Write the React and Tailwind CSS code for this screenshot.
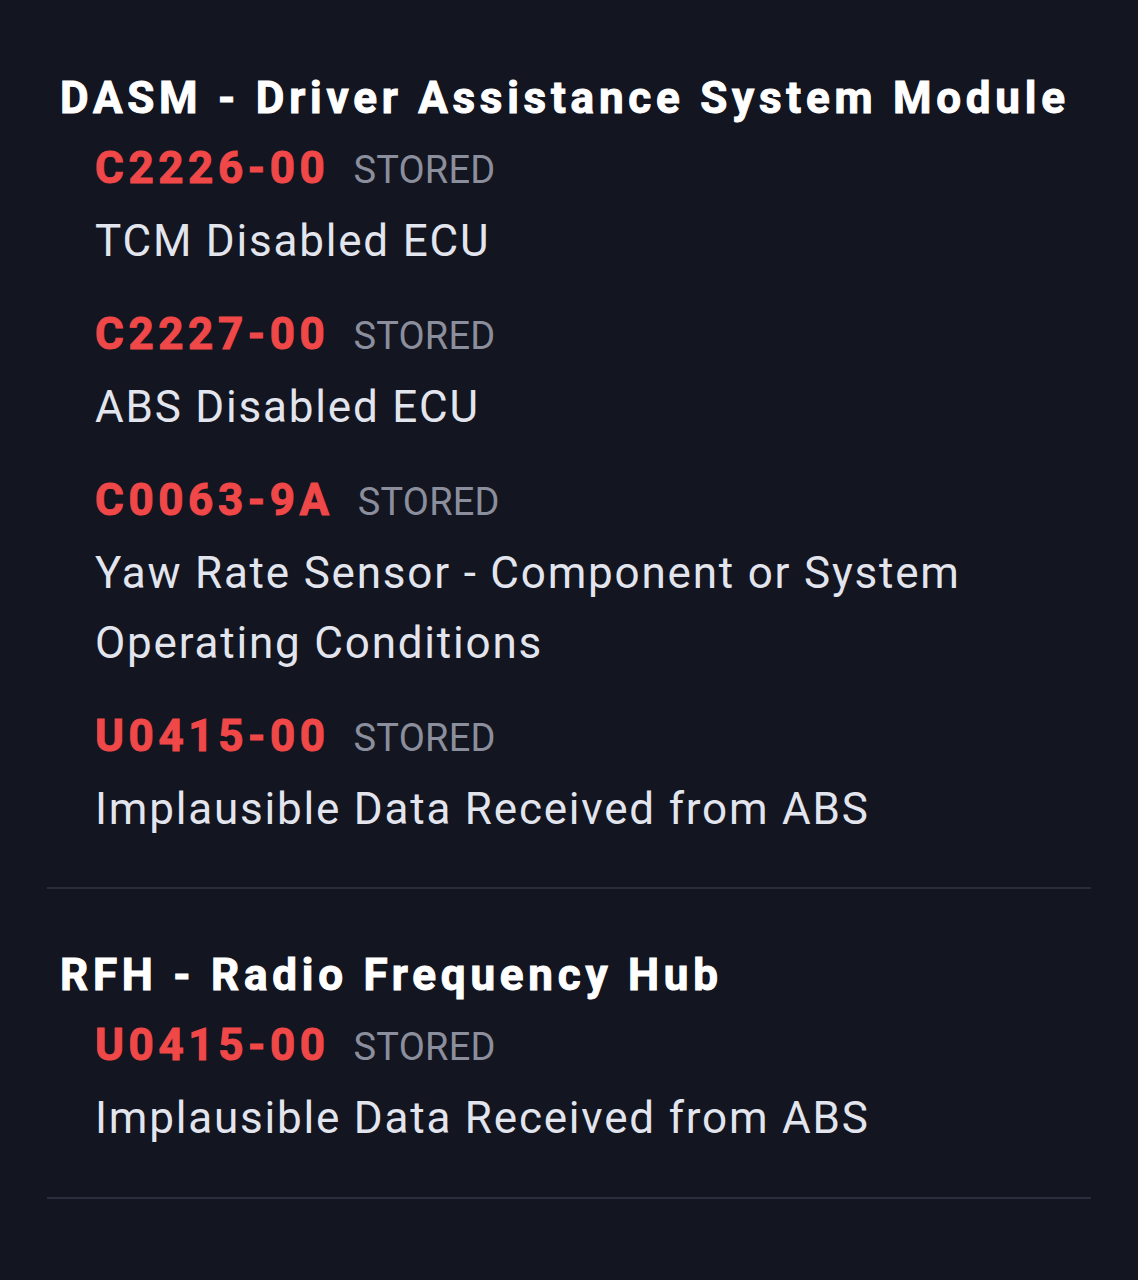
import React from 'react';

const modules = [
    {
        title: 'DASM - Driver Assistance System Module',
        codes: [
            { code: 'C2226-00', desc: 'TCM Disabled ECU' },
            { code: 'C2227-00', desc: 'ABS Disabled ECU' },
            { code: 'C0063-9A', desc: 'Yaw Rate Sensor - Component or System Operating Conditions' },
            { code: 'U0415-00', desc: 'Implausible Data Received from ABS' },
        ],
    },
    {
        title: 'RFH - Radio Frequency Hub',
        codes: [{ code: 'U0415-00', desc: 'Implausible Data Received from ABS' }],
    },
];

function DtcItem({ code, desc }) {
    return (
        <div className="mt-[23px] first:mt-0">
            <div className="flex items-baseline h-[70px] leading-[70px]">
                <span className="text-[44px] font-bold text-[#f04848] tracking-[4.6px] [-webkit-text-stroke:1px_#f04848]">{code}</span>
                <span className="ml-[24px] text-[38px] text-[#8b8e9c] tracking-[0.2px]">STORED</span>
            </div>
            <p className="mt-[3px] text-[44px] leading-[70px] text-[#e3e5ee] tracking-[1.8px] max-w-[900px]">{desc}</p>
        </div>
    );
}

export default function App() {
    return (
        <div className="min-h-[1280px] bg-[#131520] pt-[63px] px-[47px] font-['Roboto',sans-serif]">
            {modules.map((m, i) => (
                <div key={i} className={i === 0 ? 'border-b-2 border-[#2a2d3b] pb-[43px]' : 'border-b-2 border-[#2a2d3b] pb-[44px] pt-[51px]'}>
                    <h2 className="pl-[13px] text-[44px] leading-[70px] font-bold text-white tracking-[4.75px] [-webkit-text-stroke:1px_white]">{m.title}</h2>
                    <div className="pl-[48px]">
                        {m.codes.map((c, j) => (
                            <DtcItem key={j} {...c} />
                        ))}
                    </div>
                </div>
            ))}
        </div>
    );
}
